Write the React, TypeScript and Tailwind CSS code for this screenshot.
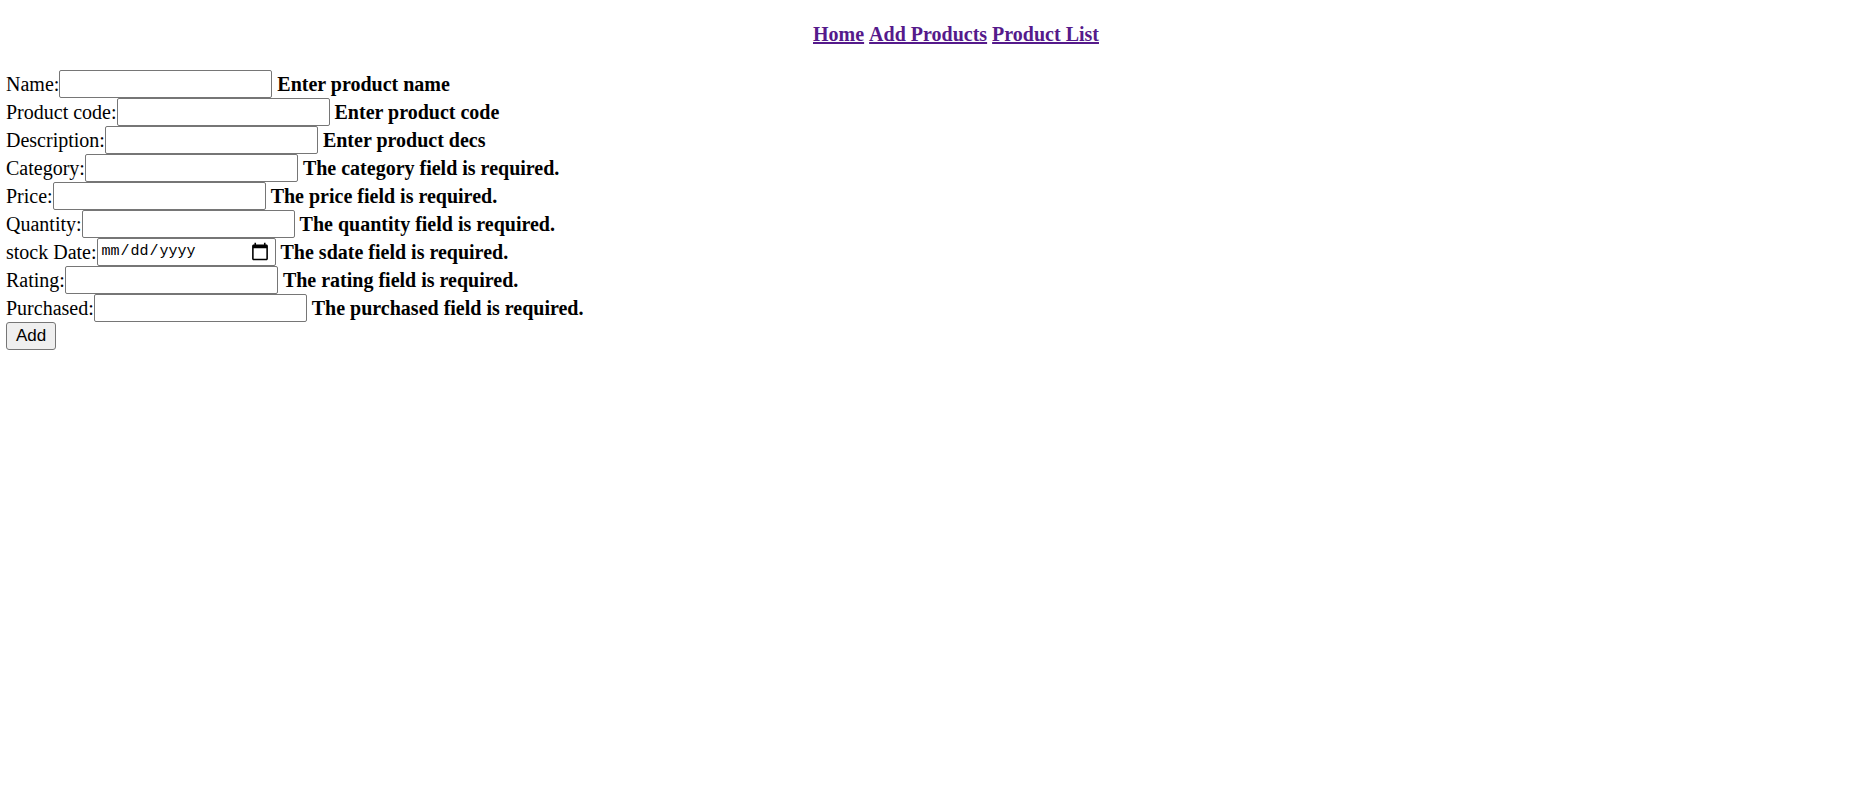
import React from "react";

type Field = { id: string; label: string; error: string; type?: string };

const fields: Field[] = [
  { id: "name", label: "Name:", error: "Enter product name" },
  { id: "code", label: "Product code:", error: "Enter product code" },
  { id: "description", label: "Description:", error: "Enter product decs" },
  { id: "category", label: "Category:", error: "The category field is required." },
  { id: "price", label: "Price:", error: "The price field is required." },
  { id: "quantity", label: "Quantity:", error: "The quantity field is required." },
  { id: "sdate", label: "stock Date:", error: "The sdate field is required.", type: "date" },
  { id: "rating", label: "Rating:", error: "The rating field is required." },
  { id: "purchased", label: "Purchased:", error: "The purchased field is required." },
];

const links = ["Home", "Add Products", "Product List"];

export default function App() {
  return (
    <div className="bg-white px-1.5 pt-5 font-['Liberation_Serif',serif] text-[20px] leading-7 text-black">
      <nav className="flex justify-center gap-[5px] pb-[22px] pl-[45px] font-bold">
        {links.map((link) => (
          <a key={link} href="#" className="text-[#551a8b] underline decoration-2">
            {link}
          </a>
        ))}
      </nav>
      <form>
        {fields.map((field) => (
          <div key={field.id} className="flex h-7 items-center">
            <label htmlFor={field.id}>{field.label}</label>
            {field.type === "date" ? (
              <input
                id={field.id}
                type="date"
                className="h-7 w-[179px] rounded-[2px] border border-[#767676] px-[3px] font-['Liberation_Mono',monospace] text-[15px] [&::-webkit-calendar-picker-indicator]:h-5 [&::-webkit-calendar-picker-indicator]:w-5 [&::-webkit-calendar-picker-indicator]:bg-contain"
              />
            ) : (
              <input
                id={field.id}
                type="text"
                className="h-7 w-[213px] rounded-[2px] border border-[#767676] px-1 font-['Liberation_Sans',sans-serif] text-[17px]"
              />
            )}
            <b className="ml-[5px]">{field.error}</b>
          </div>
        ))}
        <button
          type="button"
          className="flex h-7 items-center rounded-[3px] border border-[#767676] bg-[#efefef] px-[9px] font-['Liberation_Sans',sans-serif] text-[17px]"
        >
          Add
        </button>
      </form>
    </div>
  );
}
